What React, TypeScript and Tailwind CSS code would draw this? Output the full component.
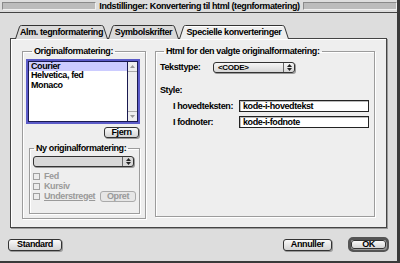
import React from "react";

function Tab({ label, w, cls, active }: { label: string; w: number; cls: string; active?: boolean }) {
  const d = `M0.5 14 L4.5 1.8 Q5 0.5 6.5 0.5 L${w - 6.5} 0.5 Q${w - 5} 0.5 ${w - 4.5} 1.8 L${w - 0.5} 14`;
  return (
    <div className={`relative h-[13px] ${cls} flex items-center justify-center`}>
      <svg className="absolute left-0 top-0 overflow-visible" width={w} height={14}>
        <path d={d} fill={active ? "#eeeeee" : "#dadada"} stroke="#333" strokeWidth={1} />
        {active && <path d={`M5.5 2 Q6 1.5 7 1.5 L${w - 7} 1.5`} fill="none" stroke="#fff" strokeWidth={1} />}
      </svg>
      <span className="relative pt-[1px]">{label}</span>
    </div>
  );
}

function Button({ label, cls, disabled }: { label: string; cls: string; disabled?: boolean }) {
  return (
    <div
      className={`${cls} flex items-center justify-center rounded-[3px] border ${
        disabled
          ? "border-[#aaa] text-[#999] bg-[#e6e6e6]"
          : "border-[#333] bg-gradient-to-b from-[#fafafa] to-[#d4d4d4] shadow-[1px_1px_0_#999]"
      }`}
    >
      {label}
    </div>
  );
}

function Arrows({ color }: { color: string }) {
  return (
    <svg width="5" height="7" viewBox="0 0 5 7">
      <path d="M2.5 0 L5 3 L0 3 Z" fill={color} />
      <path d="M0 4 L5 4 L2.5 7 Z" fill={color} />
    </svg>
  );
}

function Popup({ cls, label, disabled }: { cls: string; label?: string; disabled?: boolean }) {
  return (
    <div
      className={`${cls} flex rounded-[3px] border border-[#333] shadow-[1px_1px_0_#999] ${
        disabled ? "bg-[#d8d8d8]" : "bg-gradient-to-b from-[#f6f6f6] to-[#d6d6d6]"
      }`}
    >
      <div className="flex-1 flex items-center pl-[4px] text-[8px] tracking-[-0.3px]">{label}</div>
      <div className="w-[11px] border-l border-[#666] flex items-center justify-center">
        <Arrows color="#222" />
      </div>
    </div>
  );
}

function Check({ label, underline }: { label: string; underline?: boolean }) {
  return (
    <div className="flex items-center gap-[4px] text-[#9a9a9a]">
      <span className="w-[7px] h-[7px] border border-[#a0a0a0] bg-[#ececec]" />
      <span className={underline ? "underline" : ""}>{label}</span>
    </div>
  );
}

export default function App() {
  return (
    <div className="w-[400px] h-[263px] bg-[#dddddd] flex flex-col border-r-[3px] border-b-[2px] border-[#3a3a3a] font-['Liberation_Sans',Arial,sans-serif] font-bold text-[9px] tracking-[-0.4px] text-black leading-none overflow-hidden select-none">
      {/* title bar */}
      <div className="h-[13px] shrink-0 border-b border-[#444] flex items-center pl-[2px] pr-[0px] gap-[3px]">
        <div className="flex-1 h-[8px] bg-[#bcbcbc] border-t border-l border-[#8a8a8a] border-b border-r border-b-[#f0f0f0] border-r-[#f0f0f0]" />
        <span className="text-[9px]">Indstillinger: Konvertering til html (tegnformatering)</span>
        <div className="flex-1 h-[8px] bg-[#bcbcbc] border-t border-l border-[#8a8a8a] border-b border-r border-b-[#f0f0f0] border-r-[#f0f0f0]" />
      </div>

      <div className="flex-1 flex flex-col pl-[10px] pt-[12px]">
        {/* tabs */}
        <div className="flex h-[13px] ml-[5px] relative z-10">
          <Tab label="Alm. tegnformatering" w={93} cls="w-[93px]" />
          <Tab label="Symbolskrifter" w={71} cls="w-[71px]" />
          <Tab label="Specielle konverteringer" w={110} cls="w-[110px]" active />
        </div>

        {/* panel */}
        <div className="w-[377px] h-[190px] bg-[#eeeeee] border border-[#444] shadow-[1px_1px_0_#9a9a9a,inset_1px_1px_0_#fff] flex items-start pl-[11px] pt-[7px] gap-[9px]">
          {/* left group */}
          <fieldset className="w-[124px] h-[173px] border border-[#9c9c9c] shadow-[1px_1px_0_#fff,inset_1px_1px_0_#fff] pl-[3px]">
            <legend className="ml-[6px] px-[2px] leading-[11px]">Originalformatering:</legend>
            <div className="mt-[2px] w-[114px] h-[65px] border-2 border-[#5b5bc8] flex">
              <div className="flex-1 border border-r-0 border-[#1a1a50] bg-white pt-[0px] flex flex-col">
                <div className="h-[9px] bg-[#ccccff] pl-[2px] flex items-center">Courier</div>
                <div className="h-[9.5px] pl-[2px] flex items-center">Helvetica, fed</div>
                <div className="h-[9.5px] pl-[2px] flex items-center">Monaco</div>
              </div>
              <div className="w-[11px] border border-[#1a1a50] bg-[#eeeeee] flex flex-col justify-between">
                <div className="h-[10px] border-b border-[#aaa] flex items-center justify-center">
                  <svg width="5" height="3" viewBox="0 0 5 3">
                    <path d="M2.5 0 L5 3 L0 3 Z" fill="#999" />
                  </svg>
                </div>
                <div className="h-[10px] border-t border-[#aaa] flex items-center justify-center">
                  <svg width="5" height="3" viewBox="0 0 5 3">
                    <path d="M0 0 L5 0 L2.5 3 Z" fill="#999" />
                  </svg>
                </div>
              </div>
            </div>
            <div className="flex justify-end w-[114px] pr-[1px] mt-[3px]">
              <Button label="Fjern" cls="w-[35px] h-[11px]" />
            </div>

            {/* inner group */}
            <fieldset className="ml-[3px] mt-[5px] w-[111px] h-[71px] border border-[#9c9c9c] shadow-[1px_1px_0_#fff,inset_1px_1px_0_#fff] pl-[3px]">
              <legend className="ml-[1px] px-[2px] leading-[11px]">Ny originalformatering:</legend>
              <Popup cls="mt-[2px] w-[101px] h-[11px]" disabled />
              <div className="mt-[4px] flex flex-col">
                <div className="h-[10px] flex items-center pl-[0px]">
                  <Check label="Fed" />
                </div>
                <div className="h-[10px] flex items-center">
                  <Check label="Kursiv" />
                </div>
                <div className="h-[10px] flex items-center justify-between pr-[3px]">
                  <Check label="Understreget" underline />
                  <Button label="Opret" cls="w-[36px] h-[11px]" disabled />
                </div>
              </div>
            </fieldset>
          </fieldset>

          {/* right group */}
          <fieldset className="w-[220px] h-[171px] border border-[#9c9c9c] shadow-[1px_1px_0_#fff,inset_1px_1px_0_#fff] pl-[4px]">
            <legend className="ml-[4px] px-[2px] leading-[11px]">Html for den valgte originalformatering:</legend>
            <div className="mt-[5px] flex items-center">
              <span className="w-[53px]">Teksttype:</span>
              <Popup cls="w-[82px] h-[11px]" label="<CODE>" />
            </div>
            <div className="mt-[13px]">Style:</div>
            <div className="mt-[5px] flex items-center pl-[13px]">
              <span className="w-[66px]">I hovedteksten:</span>
              <div className="w-[130px] h-[12px] border border-[#222] bg-white shadow-[inset_1px_1px_0_#bbb] flex items-center pl-[3px]">
                kode-i-hovedtekst
              </div>
            </div>
            <div className="mt-[4px] flex items-center pl-[13px]">
              <span className="w-[66px]">I fodnoter:</span>
              <div className="w-[130px] h-[12px] border border-[#222] bg-white shadow-[inset_1px_1px_0_#bbb] flex items-center pl-[3px]">
                kode-i-fodnote
              </div>
            </div>
          </fieldset>
        </div>

        {/* buttons */}
        <div className="mt-[9px] h-[15px] flex items-center justify-between pr-[8px]">
          <Button label="Standard" cls="-ml-[2px] w-[54px] h-[12px]" />
          <div className="flex items-center gap-[16px]">
            <Button label="Annuller" cls="w-[49px] h-[12px]" />
            <div className="w-[41px] h-[15px] rounded-[5px] border-[3px] border-[#555] flex">
              <Button label="OK" cls="flex-1" />
            </div>
          </div>
        </div>
      </div>
    </div>
  );
}
